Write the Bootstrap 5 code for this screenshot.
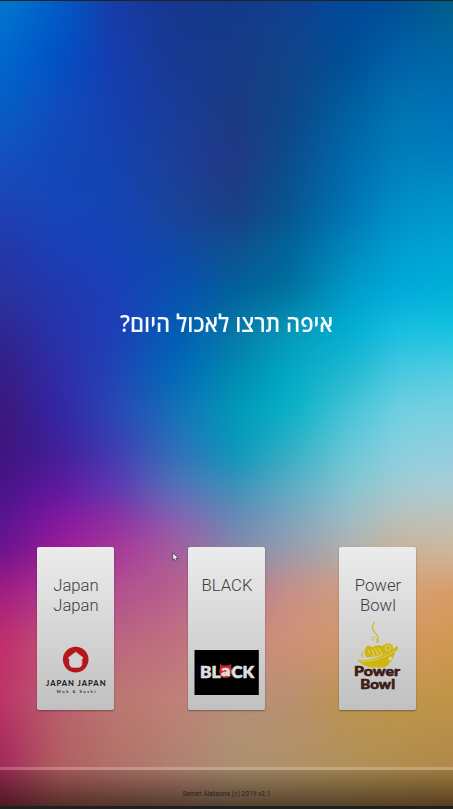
<!DOCTYPE html>
<html lang="he">
<head>
<meta charset="utf-8">
<meta name="viewport" content="width=device-width, initial-scale=1">
<title>איפה תרצו לאכול היום?</title>
<link href="https://cdn.jsdelivr.net/npm/bootstrap@5.3.0/dist/css/bootstrap.min.css" rel="stylesheet">
<style>
body{font-family:Roboto,"Liberation Sans",sans-serif;background:#222}
.screen{height:809px;border-top:1px solid #222;border-bottom:3px solid #202020}
.backdrop{z-index:0}
.content{z-index:1}
.headline{height:546px;padding-top:306px}
.headline h1{font-family:"Open Sans","Noto Sans",sans-serif;font-size:24px;font-weight:600;line-height:32px;color:#f4fbff;transform:scaleX(.918)}
.choice{width:77px;height:163px;border-radius:2px;background:linear-gradient(#ececec,#c0c0c0);box-shadow:0 1px 2px rgba(0,0,0,.35);padding-top:29px;color:#3c3c3c;text-decoration:none}
.choice-name{font-size:16.7px;line-height:20px;font-weight:300;height:39px;padding-left:1px}
.choices{height:220px}
.foot{height:39px;border-top:3px solid rgba(255,255,255,.22);background:linear-gradient(rgba(20,10,0,.12),rgba(20,10,0,.58));background-clip:padding-box;font-size:6.7px;line-height:10px;color:#2b211b;padding-top:19px}
.pointer{left:172px;top:551px;z-index:2}
</style>
<script src="https://cdn.jsdelivr.net/npm/bootstrap@5.3.0/dist/js/bootstrap.bundle.min.js"></script>
</head>
<body class="m-0 overflow-hidden">
<main class="screen position-relative overflow-hidden">
<svg id="backdrop" class="backdrop position-absolute top-0 start-0 w-100 h-100" viewBox="0 1 453 805" preserveAspectRatio="none" aria-hidden="true"></svg>
<div class="content position-relative d-flex flex-column h-100">
<header class="headline text-center"><h1 class="m-0" dir="rtl">איפה תרצו לאכול היום?</h1></header>
<div class="row g-0 choices">
<div class="col-4 d-flex justify-content-center align-items-start">
<a class="choice d-flex flex-column text-center" href="#">
<span class="choice-name">Japan<br>Japan</span>
<svg width="77" height="95" viewBox="37 615 77 95">
<circle cx="75.7" cy="659.6" r="12.8" fill="#b51619"/>
<path d="M75.700 652.200 83 657.800 81.800 659.500V664.500Q81 667.300 78.500 667.300H72.900Q70.400 667.300 69.600 664.500V659.500L68.400 657.800z" fill="#d2d2d2" stroke="#d2d2d2" stroke-width=".8" stroke-linejoin="round"/>
<text x="46" y="685.5" font-family="Lato" font-size="7.6" font-weight="900" fill="#252328" textLength="59.5">JAPAN JAPAN</text>
<text x="56.5" y="693" font-family="Lato" font-size="4.3" font-weight="700" fill="#353338" textLength="39">Wok &amp; Sushi</text>
</svg></a></div>
<div class="col-4 d-flex justify-content-center align-items-start">
<a class="choice d-flex flex-column text-center" href="#">
<span class="choice-name">BLACK</span>
<svg width="77" height="95" viewBox="188 615 77 95">
<path fill="#000" d="M194.5 650h64.3v45h-64.3z"/>
<path d="M220 664l2.600 1.400h6l2.600-1.400v3.600q2.200 4.800-.9 8.800-4.700 3.400-9.400 0-3-4-.9-8.800z" fill="#c8282a"/>
<g font-family="Lato" font-weight="900" fill="#dedede" stroke="#dedede" stroke-width=".7"><text x="200" y="678" font-size="16" textLength="20.500" lengthAdjust="spacingAndGlyphs">BL</text><text x="221.300" y="675.500" font-size="15" textLength="9" lengthAdjust="spacingAndGlyphs">a</text><text x="231.500" y="678" font-size="16" textLength="22.500" lengthAdjust="spacingAndGlyphs">CK</text></g>
</svg></a></div>
<div class="col-4 d-flex justify-content-center align-items-start">
<a class="choice d-flex flex-column text-center" href="#">
<span class="choice-name">Power<br>Bowl</span>
<svg width="77" height="95" viewBox="339 615 77 95">
<g fill="none" stroke="#cdb317" stroke-linecap="round">
<path d="M374.300 622c-3.500 5-2 7.500 1.200 11 3 3.500 3.800 6.500 1.600 9.500" stroke-width="1.100"/>
<path d="M377 642c1.500-5.500-4.500-7-5.300-3.500-.3 2 2.500 2.500 2.600.6" stroke-width=".8"/>
<path d="M362.500 657.500c-1.500-4 0-6.500 2.500-6" stroke-width="1"/></g>
<path d="M366 657.500Q363.500 650 366 647q3-2.500 6 .3 5-3.300 10.500-1.300 4-4.500 8.500-1.800 3.500 3 1.500 6.300-9 6-26.500 7z" fill="#cfb60c"/>
<g fill="none" stroke="#dcd9bf" stroke-width=".8"><circle cx="387.700" cy="648" r="2.700"/><path d="M371.500 649.500q2.500 3 2.500 7M374.500 648.500q3 3 3.500 7M378 648q3 3 3.500 6M367.500 649.500q2 1 2 4"/></g>
<path d="M357.300 659.500Q366 661.500 377 657.500 390 653.500 396.500 646.300q3 .5 1 3.200l-2.500 2.500q-2 10.500-10.500 15.500h-14q-8.500-2-13.200-8z" fill="#cfb60c"/>
<path d="M361 661.500Q380 661.500 395.500 650.500" fill="none" stroke="#dcd9bf" stroke-width=".6"/>
<path d="M388.500 658q2.500-2.300 3.700-.3-.3 2.600-2.800 3z" fill="#d9d7c6"/>
<g font-family="Lato" font-weight="900" fill="#3c1c14" stroke="#3c1c14" stroke-width=".6"><text x="354" y="675.500" font-size="13.500" textLength="46" lengthAdjust="spacingAndGlyphs">Power</text><text x="360.300" y="689.300" font-size="13.500" textLength="34.700" lengthAdjust="spacingAndGlyphs">Bowl</text></g>
</svg></a></div>
</div>
<footer class="foot text-center">Samer Alataona (c) 2019 v2.1</footer>
</div>
<svg class="pointer position-absolute" width="8" height="11" viewBox="0 0 8 11" aria-hidden="true"><path d="M.7.8v7.500l1.800-1.500 1.300 2.800 1.500-.7L4 6.300h2.500z" fill="#eee" stroke="#443344" stroke-width=".8"/></svg>
</main>
<script>
// Mesh gradient: each row is a horizontal colour ramp that fades in over the previous one.
const xs=[0,60,115,175,235,290,350,400,453];
const rows=[
[0,"0078cc 005cc8 183ba5 15378f 123a88 103f90 00499a 004d96 005f88"],
[60,"0068d0 0050c4 163db0 173990 183a86 124488 004f97 0062a8 0068a8"],
[110,"0560c5 114bbd 173fb0 183c98 1b3a82 0d4688 0060a0 0074b0 0070b8"],
[160,"1450bf 1247b8 1444b0 1b4099 213784 0c4e8d 006aac 0080bb 0080c0"],
[210,"1f42b5 1646b8 1644b5 1a4499 1b3e85 075690 0075b5 0090c8 0098cc"],
[250,"2636a8 1a40b8 1644b8 1048a8 0f5290 00659a 0088bd 009fd0 00a5d5"],
[290,"29339f 2238b0 1c40b8 0850b0 00609a 00729f 009cc8 00aadc 00b0d8"],
[330,"302690 2634ac 1f3fb8 045bb4 0878a5 0898b8 00aed4 1abfe0 12c4de"],
[370,"351e85 2f2da8 2044b5 0068b8 0089b0 00a8c5 20b8d0 48c8e0 50cce2"],
[410,"3d187c 3326a5 2a48b5 1570b8 0099b8 08b0c8 48c4d8 70d0e0 78d0e0"],
[450,"3f147d 402098 3f3cb4 3070b8 0898bb 30b0c4 68c8d8 88d0e0 90cfe0"],
[490,"481488 6018a0 6238b0 5a70b8 4090b8 60abc4 88c5d0 a5cad0 accdd5"],
[520,"581490 8518a0 9030a0 8a60b0 6a88b5 7fa4bb a0bcc4 bcc0b8 c0c0b5"],
[550,"68148c 9c1c98 a83898 a85c9c 8488ac 989cae b4b0ac c8b498 ccb8a0"],
[590,"a01c80 b03898 b05090 b8608c b07890 c89088 d09c80 d8a078 d89c68"],
[640,"c02c6c c05878 bc6480 c07080 c88880 d09078 d09868 d49860 d09850"],
[700,"bc3468 bc6070 bc7870 c08078 b89078 b89070 bc9450 bf9648 c09448"],
[765,"a02858 b06060 b07068 b08070 aa9070 b09068 b09058 b08c50 b08848"]];
let defs='<filter id="soft" x="-10%" y="-10%" width="120%" height="120%" color-interpolation-filters="sRGB"><feGaussianBlur stdDeviation="9"/></filter>',layers='';
rows.forEach(([y,c],i)=>{
  defs+=`<linearGradient id="ramp${i}" gradientUnits="userSpaceOnUse" x1="0" x2="453" y1="0" y2="0">${c.split(' ').map((h,k)=>`<stop offset="${xs[k]/453}" stop-color="#${h}"/>`).join('')}</linearGradient>`;
  let m='';
  if(i){defs+=`<linearGradient id="fade${i}" gradientUnits="userSpaceOnUse" x1="0" x2="0" y1="${rows[i-1][0]}" y2="${y}"><stop stop-color="#fff" stop-opacity="0"/><stop offset="1" stop-color="#fff"/></linearGradient><mask id="veil${i}" maskUnits="userSpaceOnUse" x="-50" y="-50" width="553" height="909"><rect x="-50" y="-50" width="553" height="909" fill="url(#fade${i})"/></mask>`;m=` mask="url(#veil${i})"`}
  layers+=`<rect x="-50" y="-50" width="553" height="909" fill="url(#ramp${i})"${m}/>`;
});
document.getElementById('backdrop').innerHTML=`<defs>${defs}</defs><g filter="url(#soft)">${layers}</g>`;
</script>
</body>
</html>
